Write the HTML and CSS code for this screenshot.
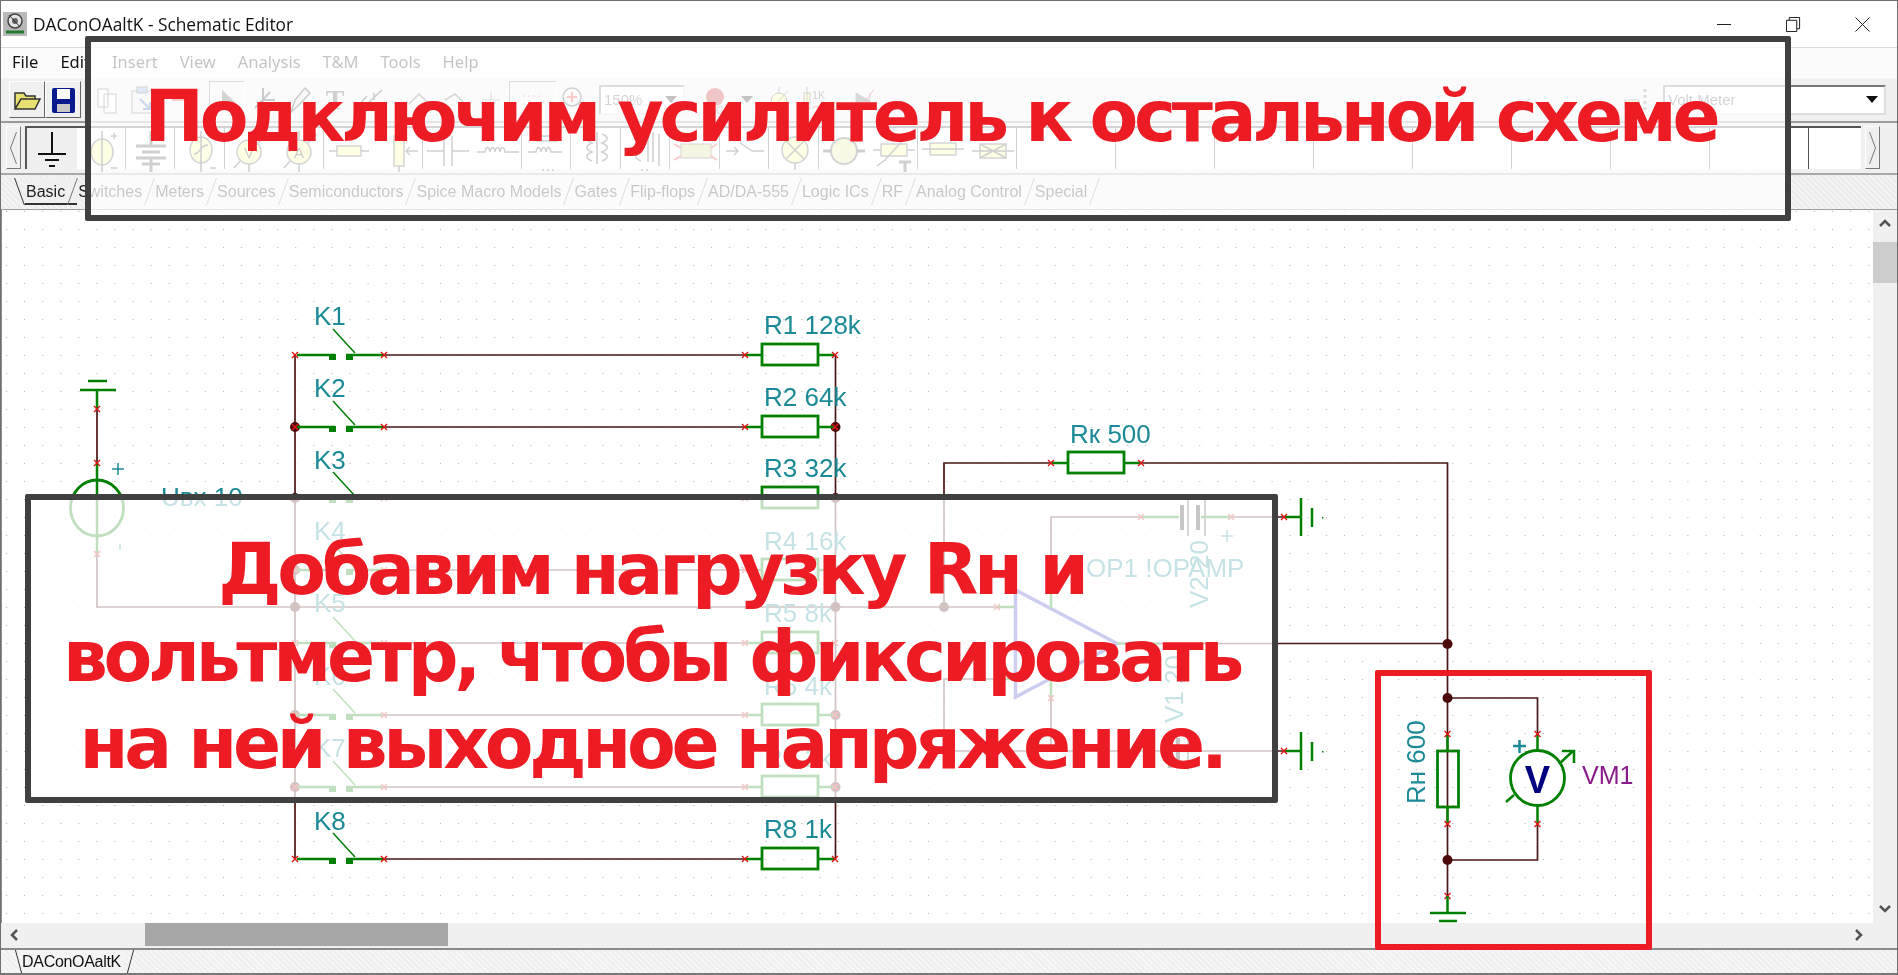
FILE: index.html
```html
<!DOCTYPE html>
<html lang="ru">

<head>
    <meta charset="UTF-8">
    <title>DAConOAaltK - Schematic Editor</title>
    <link rel="stylesheet" href="styles.css">
</head>

<body>
    <div class="window">
        <header class="titlebar">
            <svg class="app-icon" viewBox="0 0 24 24">
                <rect width="24" height="24" fill="#b8b8b8" />
                <circle cx="12" cy="9" r="7" fill="#e4e4e4" stroke="#444" stroke-width="1.5" />
                <circle cx="12" cy="9" r="3" fill="#666" />
                <path d="M3 20H21" stroke="#1f7a2e" stroke-width="3" />
                <path d="M6 3L17 15" stroke="#333" />
            </svg>
            <span class="app-title">DAConOAaltK - Schematic Editor</span>
            <div class="win-controls">
                <svg class="win-btn" viewBox="0 0 16 16"><path d="M0 8H15" /></svg>
                <svg class="win-btn" viewBox="0 0 16 16"><path d="M.5 3.5H11.5V15.5H.5ZM3.5 3.5V.5H14.5V12.5H11.5" /></svg>
                <svg class="win-btn" viewBox="0 0 16 16"><path d="M.5 .5L15.5 15.5M15.5 .5L.5 15.5" /></svg>
            </div>
        </header>

        <nav class="menubar">
            <span>File</span>
            <span>Edit</span>
            <span>Insert</span>
            <span>View</span>
            <span>Analysis</span>
            <span>T&amp;M</span>
            <span>Tools</span>
            <span>Help</span>
        </nav>

        <div class="toolbar">
            <div class="tb raised">
                <svg viewBox="0 0 30 30"><path d="M3 24V8H12L14 11H23V14H9L3 24H23L28 14H9" fill="#e8e070" stroke="#333" stroke-width="1.5" /></svg>
            </div>
            <div class="tb raised">
                <svg viewBox="0 0 30 30"><rect x="4" y="3" width="23" height="25" rx="2" fill="#0a1a8c" /><rect x="9" y="4" width="13" height="10" fill="#fff" /><rect x="9" y="19" width="13" height="8" fill="#c8c8c8" /></svg>
            </div>
            <div class="tb-gap w8"></div>
            <div class="tb">
                <svg viewBox="0 0 30 30"><path d="M6 4H16V22H6ZM12 9H24V28H12Z" fill="#fff" stroke="#555" /></svg>
            </div>
            <div class="tb">
                <svg viewBox="0 0 30 30"><rect x="4" y="6" width="20" height="22" fill="#e8e8e8" stroke="#555" /><rect x="9" y="2" width="10" height="6" fill="#88a8e8" stroke="#555" /><path d="M12 14L22 24M22 17V24H15" stroke="#2a5ab8" stroke-width="2" fill="none" /></svg>
            </div>
            <div class="tb">
                <svg viewBox="0 0 30 30"><path d="M8 15H22" stroke="#c33" stroke-width="2" /></svg>
            </div>
            <div class="tb-gap w12"></div>
            <div class="tb sunken">
                <svg viewBox="0 0 30 30"><path d="M10 5V24L15 19L19 27L22 25L18 18H24Z" fill="#555" /></svg>
            </div>
            <div class="tb">
                <svg viewBox="0 0 30 30"><path d="M15 3V27M15 15H27M7 23L22 7" stroke="#333" stroke-width="2" /></svg>
            </div>
            <div class="tb">
                <svg viewBox="0 0 30 30"><path d="M7 27L11 15L21 3L26 8L15 20Z" fill="#ddd" stroke="#333" stroke-width="1.5" /></svg>
            </div>
            <div class="tb"><span class="tb-letter">T</span></div>
            <div class="tb">
                <svg viewBox="0 0 30 30"><path d="M3 20L11 11M8 22L26 5M18 22H26M18 15V8" stroke="#333" stroke-width="1.5" /></svg>
            </div>
            <div class="tb-gap w12"></div>
            <div class="tb">
                <svg viewBox="0 0 30 30"><path d="M5 19L15 9L25 19" fill="none" stroke="#555" stroke-width="1.5" /></svg>
            </div>
            <div class="tb">
                <svg viewBox="0 0 30 30"><path d="M5 15L15 9L25 19" fill="none" stroke="#555" stroke-width="1.5" /></svg>
            </div>
            <div class="tb">
                <svg viewBox="0 0 30 30"><path d="M15 6V24M6 15H24" stroke="#777" /></svg>
            </div>
            <div class="tb sunken wide">
                <svg viewBox="0 0 30 30"><path d="M5 11H25M5 19H25" stroke="#777" stroke-dasharray="2 3" /></svg>
            </div>
            <div class="tb">
                <svg viewBox="0 0 30 30"><circle cx="12" cy="12" r="9" fill="#eee" stroke="#444" stroke-width="1.5" /><path d="M12 7V17M7 12H17" stroke="#d33" stroke-width="2" /><path d="M19 19L28 28" stroke="#555" stroke-width="3" /></svg>
            </div>
            <div class="tb-combo zoom-combo"><span>150%</span><i></i></div>
            <div class="tb">
                <svg viewBox="0 0 30 30"><circle cx="15" cy="12" r="9" fill="#c01818" /><text x="8" y="29" class="tb-mini">DC</text></svg>
            </div>
            <div class="tb narrow"><i class="tb-caret"></i></div>
            <div class="tb">
                <svg viewBox="0 0 30 30"><circle cx="15" cy="16" r="8" fill="#ff9" stroke="#555" /><path d="M15 2V8M15 24V29M9 22L24 6" stroke="#555" /></svg>
            </div>
            <div class="tb">
                <svg viewBox="0 0 30 30"><rect x="4" y="8" width="6" height="16" fill="#ff9" stroke="#555" /><path d="M7 2V28" stroke="#555" /><text x="12" y="14" class="tb-mini">1K</text><path d="M12 22H24" stroke="#d33" /></svg>
            </div>
            <div class="tb-gap w12"></div>
            <div class="tb">
                <svg viewBox="0 0 30 30"><path d="M8 8V24L22 16ZM22 8V24" fill="#666" stroke="#666" /><path d="M14 22L26 4" stroke="#d33" /></svg>
            </div>
            <div class="tb-fill"></div>
            <div class="tb">
                <svg viewBox="0 0 30 30"><path d="M4 15H18V22H4Z" fill="#e8d890" stroke="#777" /><path d="M24 4V28" stroke="#777" stroke-width="3" stroke-dasharray="3 3" /></svg>
            </div>
            <div class="tb-combo part-combo"><span>Volt Meter</span><i></i></div>
        </div>

        <div class="palette">
            <div class="pal-arrow"><svg viewBox="0 0 10 40"><path d="M8 4L2 20L8 36" /></svg></div>
            <div class="pal-cells">
                <div class="cell sel"><svg viewBox="0 0 49 46"><path d="M25 4V26M11 26H39M18 32H32M22 38H28" stroke="#111" stroke-width="2" /></svg></div>
                <div class="cell"><svg viewBox="0 0 49 46"><ellipse cx="25" cy="24" rx="11" ry="13" class="y" /><path d="M25 3V44M34 8H40M37 5V11M34 40H40" class="k" /></svg></div>
                <div class="cell"><svg viewBox="0 0 49 46"><path d="M25 3V18M10 18H40M16 24H34M10 30H40M25 30V44M16 36H34" class="k2" /></svg></div>
                <div class="cell"><svg viewBox="0 0 49 46"><ellipse cx="25" cy="22" rx="11" ry="13" class="y" /><path d="M25 3V44M18 26C24 26 24 17 32 17" class="k" /><path d="M34 40H40" class="k" /></svg></div>
                <div class="cell"><svg viewBox="0 0 49 46"><circle cx="24" cy="24" r="12" class="y" /><path d="M24 3V11M24 36V44M9 40L15 33M33 15L42 6" class="k" /><text x="24" y="30" class="pal-letter">V</text></svg></div>
                <div class="cell"><svg viewBox="0 0 49 46"><circle cx="24" cy="24" r="12" class="y" /><path d="M24 3V11M24 36V44M9 40L15 33M33 15L42 6" class="k" /><text x="24" y="30" class="pal-letter">A</text></svg></div>
                <div class="cell"><svg viewBox="0 0 49 46"><rect x="13" y="18" width="24" height="10" class="y" /><path d="M5 23H13M37 23H45" class="k" /></svg></div>
                <div class="cell"><svg viewBox="0 0 49 46"><rect x="20" y="8" width="10" height="30" class="y" /><path d="M25 2V8M25 38V44M44 23H32M36 19L32 23L36 27" class="k" /></svg></div>
                <div class="cell"><svg viewBox="0 0 49 46"><path d="M4 23H21M29 23H46M21 8V38M29 8V38" class="k" /></svg></div>
                <div class="cell"><svg viewBox="0 0 49 46"><path d="M4 24H12C13 18 16 18 17 24C18 18 21 18 22 24C23 18 26 18 27 24C28 18 31 18 32 24H46" class="k" /></svg></div>
                <div class="cell"><svg viewBox="0 0 49 46"><path d="M6 24H14C15 18 18 18 19 24C20 18 23 18 24 24C25 18 28 18 29 24H40M14 13H36M14 8H36" class="k" /><path d="M20 42H22M25 42H27M30 42H32" class="k" /></svg></div>
                <div class="cell"><svg viewBox="0 0 49 46"><path d="M20 6C13 9 13 12 20 15C13 18 13 21 20 24C13 27 13 30 20 33M30 6C37 9 37 12 30 15C37 18 37 21 30 24C37 27 37 30 30 33M25 4V36" class="k" /></svg></div>
                <div class="cell"><svg viewBox="0 0 49 46"><path d="M20 6C13 9 13 12 20 15C13 18 13 21 20 24C13 27 13 30 20 33M27 4V34M32 4V34M38 6V38" class="k" /><path d="M20 42H22M25 42H27" class="k" /></svg></div>
                <div class="cell"><svg viewBox="0 0 49 46"><rect x="10" y="16" width="30" height="14" fill="#d8d890" stroke="#555" /><path d="M3 16L10 20M3 32L10 28M46 16L40 20M46 32L40 28" stroke="#d33" stroke-width="2" /></svg></div>
                <div class="cell"><svg viewBox="0 0 49 46"><path d="M6 23H18M14 19L18 23L14 27M32 23H44M20 15L32 23" class="k" /></svg></div>
                <div class="cell"><svg viewBox="0 0 49 46"><circle cx="25" cy="22" r="13" class="y" /><path d="M16 13L34 31M34 13L16 31M25 35V42" class="k" /></svg></div>
                <div class="cell"><svg viewBox="0 0 49 46"><circle cx="25" cy="23" r="13" fill="#e8e8a0" stroke="#555" stroke-width="2" /><path d="M4 23H12M38 23H46" class="k2" /></svg></div>
                <div class="cell"><svg viewBox="0 0 49 46"><rect x="12" y="16" width="26" height="12" class="y" /><path d="M4 22H12M38 22H46M8 38L16 32L36 10" class="k" /><path d="M30 34H42M36 34V44" class="k2" /></svg></div>
                <div class="cell"><svg viewBox="0 0 49 46"><rect x="12" y="15" width="26" height="12" class="y" /><path d="M4 21H46M12 21H38" class="k" /></svg></div>
                <div class="cell"><svg viewBox="0 0 49 46"><rect x="12" y="16" width="26" height="14" class="y" /><path d="M4 23H46M12 16L38 30M12 30L38 16M18 8H32M20 12H30" class="k" /></svg></div>
            </div>
            <div class="pal-arrow right"><svg viewBox="0 0 10 40"><path d="M2 4L8 20L2 36" /></svg></div>
        </div>

        <div class="tabs">
            <span class="tab active">Basic</span>
            <span class="tab">Switches</span>
            <span class="tab">Meters</span>
            <span class="tab">Sources</span>
            <span class="tab">Semiconductors</span>
            <span class="tab">Spice Macro Models</span>
            <span class="tab">Gates</span>
            <span class="tab">Flip-flops</span>
            <span class="tab">AD/DA-555</span>
            <span class="tab">Logic ICs</span>
            <span class="tab">RF</span>
            <span class="tab">Analog Control</span>
            <span class="tab">Special</span>
        </div>

        <div class="workspace">
            <div class="sheet">
                <svg class="schematic" width="1871" height="713" viewBox="2 210 1871 713">
                    <defs>
                        <pattern id="grid" width="18.08" height="18" patternUnits="userSpaceOnUse" x="6" y="13">
                            <rect width="1" height="1" fill="#b0b0b0" />
                        </pattern>
                        <path id="xm" d="M-3-3L3 3M-3 3L3-3" class="xmark" />
                        <g id="switch">
                            <path d="M2 0H40M51 0H89" class="lead" />
                            <rect x="34" y="-1" width="7" height="6" fill="#008000" />
                            <rect x="51" y="-1" width="7" height="6" fill="#008000" />
                            <path d="M38-26L60-2" class="arm" />
                            <use href="#xm" />
                            <use href="#xm" x="89" />
                        </g>
                        <g id="res">
                            <path d="M0 0H17M73 0H90" class="lead" />
                            <rect x="17" y="-11" width="56" height="21" class="body" />
                            <use href="#xm" />
                            <use href="#xm" x="90" />
                        </g>
                        <g id="gnd-right">
                            <path d="M0 0H17" class="lead" />
                            <path d="M17-19V19" class="lead" />
                            <path d="M28-9V10" class="lead" />
                            <rect x="38" y="0" width="1.5" height="1.5" fill="#008000" />
                            <use href="#xm" />
                        </g>
                    </defs>
                    <rect x="2" y="210" width="1871" height="713" fill="url(#grid)" />

                    <!-- wires -->
                    <path class="wire" d="M97 409V463M97 554V607H997M295 355V859M835.5 355V859" />
                    <path class="wire" d="M384 355H745M384 427H745M384 498H745M384 570H745M384 643H745M384 715H745M384 787H745M384 859H745" />
                    <path class="wire" d="M997 679H944V751H1160M944 607V463H1051M1141 463H1447.5V896M1160 643.5H1447.5" />
                    <path class="wire" d="M1051 590V517H1141M1231 517H1284M1051 698V751M1195 751H1284" />
                    <path class="wire" d="M1447.5 698H1537.5V734M1537.5 824V860H1447.5" />

                    <!-- junctions -->
                    <g class="junctions">
                        <circle cx="295" cy="427" r="5" />
                        <circle cx="295" cy="498" r="5" />
                        <circle cx="295" cy="570" r="5" />
                        <circle cx="295" cy="607" r="5" />
                        <circle cx="295" cy="715" r="5" />
                        <circle cx="295" cy="787" r="5" />
                        <circle cx="835.5" cy="427" r="5" />
                        <circle cx="835.5" cy="498" r="5" />
                        <circle cx="835.5" cy="570" r="5" />
                        <circle cx="835.5" cy="607" r="5" />
                        <circle cx="835.5" cy="715" r="5" />
                        <circle cx="835.5" cy="787" r="5" />
                        <circle cx="944" cy="607" r="5" />
                        <circle cx="1447.5" cy="644" r="5" />
                        <circle cx="1447.5" cy="698" r="5" />
                        <circle cx="1447.5" cy="860" r="5" />
                    </g>

                    <!-- input source -->
                    <path class="lead" d="M80 390H116M88 381H107M97 390V409M97 463V555" />
                    <ellipse cx="97" cy="508" rx="26.500" ry="28" class="body" />
                    <use href="#xm" x="97" y="409" />
                    <use href="#xm" x="97" y="463" />
                    <use href="#xm" x="97" y="554" />
                    <path class="teal-mark" d="M112 469H124M118 463V475M120 544V550" />

                    <!-- switches and resistors -->
                    <use href="#switch" x="295" y="355" />
                    <use href="#switch" x="295" y="427" />
                    <use href="#switch" x="295" y="498" />
                    <use href="#switch" x="295" y="570" />
                    <use href="#switch" x="295" y="643" />
                    <use href="#switch" x="295" y="715" />
                    <use href="#switch" x="295" y="787" />
                    <use href="#switch" x="295" y="859" />
                    <use href="#res" x="745" y="355" />
                    <use href="#res" x="745" y="427" />
                    <use href="#res" x="745" y="498" />
                    <use href="#res" x="745" y="570" />
                    <use href="#res" x="745" y="643" />
                    <use href="#res" x="745" y="715" />
                    <use href="#res" x="745" y="787" />
                    <use href="#res" x="745" y="859" />
                    <use href="#res" x="1051" y="463" />

                    <!-- op amp -->
                    <path d="M1015.500 590V697L1117 643.500Z" class="opamp" />
                    <path class="lead" d="M997 607H1015M997 679H1015M1051 590V608M1051 680V698M1117 643.500H1160" />
                    <use href="#xm" x="997" y="607" />
                    <use href="#xm" x="997" y="679" />
                    <use href="#xm" x="1051" y="590" />
                    <use href="#xm" x="1051" y="698" />

                    <!-- supply batteries -->
                    <path class="lead" d="M1141 517H1179M1201 517H1231" />
                    <path class="plate" d="M1182 505V530M1198 505V530" />
                    <path class="plate-thin" d="M1188 498V536M1205 498V536" />
                    <use href="#xm" x="1141" y="517" />
                    <use href="#xm" x="1231" y="517" />
                    <path class="teal-mark" d="M1221 536H1233M1227 530V542" />
                    <use href="#gnd-right" x="1284" y="517" />
                    <path class="lead" d="M1160 751H1195" />
                    <path class="plate" d="M1170 738V768M1178 738V768" />
                    <path class="plate-thin" d="M1188 733V770" />
                    <use href="#gnd-right" x="1284" y="751" />

                    <!-- load and voltmeter -->
                    <g transform="translate(1447.500 734) rotate(90)"><use href="#res" /></g>
                    <use href="#xm" x="1447.500" y="896" />
                    <path class="lead" d="M1447.500 896V913M1430 913H1466M1439 921H1457" />
                    <path class="lead" d="M1537.500 734V751M1537.500 806V824" />
                    <ellipse cx="1537.500" cy="778" rx="27" ry="27.500" class="body" />
                    <path class="lead" d="M1559 764L1573 751M1562 751H1574V763M1506 802L1514 795" />
                    <use href="#xm" x="1537.500" y="734" />
                    <use href="#xm" x="1537.500" y="824" />
                    <path class="teal-mark thick" d="M1513 746H1526M1519.500 740V753" />

                    <!-- labels -->
                    <g class="label">
                        <text x="314" y="325">K1</text>
                        <text x="314" y="397">K2</text>
                        <text x="314" y="469">K3</text>
                        <text x="314" y="540">K4</text>
                        <text x="314" y="612">K5</text>
                        <text x="314" y="685">K6</text>
                        <text x="314" y="757">K7</text>
                        <text x="314" y="830">K8</text>
                        <text x="764" y="334">R1 128k</text>
                        <text x="764" y="406">R2 64k</text>
                        <text x="764" y="477">R3 32k</text>
                        <text x="764" y="550">R4 16k</text>
                        <text x="764" y="622">R5 8k</text>
                        <text x="764" y="695">R6 4k</text>
                        <text x="764" y="767">R7 2k</text>
                        <text x="764" y="838">R8 1k</text>
                        <text x="1070" y="443">Rк 500</text>
                        <text x="161" y="506">Uвх 10</text>
                        <text x="1086" y="577">OP1 !OPAMP</text>
                        <text transform="translate(1208 608) rotate(-90)">V2 20</text>
                        <text transform="translate(1183 723) rotate(-90)">V1 20</text>
                        <text transform="translate(1425 804) rotate(-90)">Rн 600</text>
                    </g>
                    <text x="1582" y="784" class="vm-label">VM1</text>
                    <text x="1537.500" y="793" class="vm-letter">V</text>
                </svg>
            </div>
            <div class="vscroll">
                <svg class="sb-arrow" viewBox="0 0 14 10"><path d="M2 8L7 3L12 8" /></svg>
                <div class="vthumb"></div>
                <svg class="sb-arrow bottom" viewBox="0 0 14 10"><path d="M2 2L7 7L12 2" /></svg>
            </div>
        </div>

        <div class="hscroll">
            <svg class="sb-arrow" viewBox="0 0 10 14"><path d="M8 2L3 7L8 12" /></svg>
            <div class="hthumb"></div>
            <svg class="sb-arrow end" viewBox="0 0 10 14"><path d="M2 2L7 7L2 12" /></svg>
        </div>

        <div class="doc-tabs">
            <span class="doc-tab">DAConOAaltK</span>
        </div>
    </div>

    <div class="note note-top">Подключим усилитель к остальной схеме</div>
    <div class="note note-main">Добавим нагрузку Rн и<br>вольтметр, чтобы фиксировать<br>на ней выходное напряжение.</div>
    <div class="frame"></div>
</body>

</html>
```

FILE: styles.css
```css
* {
    box-sizing: border-box;
}

html,
body {
    margin: 0;
    height: 100%;
    overflow: hidden;
    background: #fff;
}

.window {
    position: relative;
    display: flex;
    flex-direction: column;
    width: 1898px;
    height: 975px;
    border-top: 1px solid #6f6f6f;
    border-left: 1px solid #6f6f6f;
    border-right: 1px solid #6f6f6f;
    font-family: "Liberation Sans", Arial, sans-serif;
    filter: blur(0.35px);
}

/* title bar */
.titlebar {
    display: flex;
    align-items: center;
    height: 47px;
    padding-left: 2px;
    background: #fff;
    border-bottom: 1px solid #dcdcdc;
}

.app-icon {
    width: 24px;
    height: 24px;
}

.app-title {
    margin-left: 6px;
    font-family: "Open Sans", sans-serif;
    font-size: 17.3px;
    color: #111;
}

.win-controls {
    display: flex;
    margin-left: auto;
    padding-right: 27px;
    gap: 54px;
}

.win-btn {
    width: 15px;
    height: 15px;
    fill: none;
    stroke: #111;
    stroke-width: 1;
}

/* menu */
.menubar {
    display: flex;
    align-items: center;
    height: 29px;
    padding: 0 0 2px 11px;
    background: #fbfbfb;
    font-family: "Noto Sans", sans-serif;
    font-size: 16.5px;
    color: #111;
}

.menubar span {
    margin-right: 22px;
}

/* toolbar */
.toolbar {
    display: flex;
    align-items: center;
    height: 46px;
    padding-left: 8px;
    padding-right: 11px;
    background: #f0f0f0;
    border-top: 1px solid #fff;
    border-bottom: 2px solid #9a9a9a;
}

.tb {
    display: flex;
    align-items: center;
    justify-content: center;
    width: 36px;
    height: 37px;
}

.tb svg {
    width: 30px;
    height: 30px;
}

.tb.raised {
    border: 1px solid;
    border-color: #fff #666 #666 #fff;
}

.tb.sunken {
    border: 1px solid;
    border-color: #777 #fff #fff #777;
}

.tb.wide {
    width: 48px;
}

.tb.narrow {
    width: 28px;
}

.tb-gap.w8 {
    width: 8px;
}

.tb-gap.w12 {
    width: 12px;
}

.tb-fill {
    flex: 1;
}

.tb-letter {
    font-family: "Liberation Serif", serif;
    font-weight: bold;
    font-size: 28px;
    color: #444;
}

.tb-mini {
    font-size: 11px;
    fill: #555;
}

.tb-caret,
.tb-combo i {
    display: block;
    width: 0;
    height: 0;
    border-left: 6px solid transparent;
    border-right: 6px solid transparent;
    border-top: 7px solid #111;
}

.tb-combo {
    display: flex;
    align-items: center;
    height: 30px;
    background: #fff;
    border: 2px solid;
    border-color: #777 #ddd #ddd #777;
    font-size: 15px;
    color: #555;
}

.tb-combo span {
    flex: 1;
    padding-left: 3px;
}

.zoom-combo {
    width: 86px;
    margin: 0 12px 0 6px;
}

.part-combo {
    width: 223px;
    margin-left: 9px;
}

.tb-combo i {
    margin-right: 6px;
}

/* component palette */
.palette {
    display: flex;
    height: 52px;
    padding: 3px 0 4px 5px;
    background: #f0f0f0;
    border-bottom: 2px solid #a8a8a8;
}

.pal-arrow {
    display: flex;
    align-items: center;
    width: 15px;
    background: #f0f0f0;
    border: 1px solid;
    border-color: #fff #777 #777 #fff;
}

.pal-arrow svg {
    width: 13px;
    height: 40px;
    fill: none;
    stroke: #777;
}

.pal-arrow.right {
    margin-left: 4px;
    margin-right: 17px;
}

.pal-cells {
    display: flex;
    flex: 1;
    margin-left: 4px;
    padding-right: 0;
    background-color: #fff;
    background-image: repeating-linear-gradient(to right, transparent 0, transparent 48.5px, #555 48.5px, #555 49.5px);
    border-top: 2px solid #555;
    border-left: 2px solid #555;
}

.cell {
    flex: none;
    width: 49.5px;
    height: 100%;
}

.cell svg {
    display: block;
    width: 49px;
    height: 46px;
    fill: none;
}

.cell.sel {
    background: #f0f0f0;
}

.cell .y {
    fill: #ffff99;
    stroke: #555;
    stroke-width: 1.5;
}

.cell .k {
    stroke: #444;
    stroke-width: 1.5;
    fill: none;
}

.cell .k2 {
    stroke: #444;
    stroke-width: 3;
    fill: none;
}

.pal-letter {
    font-size: 15px;
    text-anchor: middle;
    fill: #333;
}

/* component tabs */
.tabs {
    display: flex;
    height: 35px;
    padding: 3px 0 0 24px;
    background: repeating-linear-gradient(45deg, #f4f4f4 0, #f4f4f4 2px, #ececec 2px, #ececec 4px);
    border-bottom: 1px solid #a0a0a0;
    font-size: 16px;
    color: #222;
}

.tab {
    position: relative;
    height: 27px;
    line-height: 28px;
    padding: 0 12px 0 1px;
}

.tab::after {
    content: "";
    position: absolute;
    top: 0;
    right: 4px;
    width: 1px;
    height: 27px;
    background: #777;
    transform: skewX(-20deg);
}

.tab.active {
    border-bottom: 2px solid #333;
    background: #f0f0f0;
}

.tab.active::before {
    content: "";
    position: absolute;
    top: 0;
    left: -6px;
    width: 1px;
    height: 27px;
    background: #333;
    transform: skewX(20deg);
}

/* drawing area */
.workspace {
    display: flex;
    flex: 1;
    min-height: 0;
    border-left: 1px solid #8a8a8a;
}

.sheet {
    flex: 1;
    background: #fff;
    overflow: hidden;
}

.schematic {
    display: block;
}

.wire {
    fill: none;
    stroke: #4b1616;
    stroke-width: 1.7;
}

.lead {
    fill: none;
    stroke: #008000;
    stroke-width: 2.500;
}

.arm {
    stroke: #008000;
    stroke-width: 1.500;
}

.body {
    fill: none;
    stroke: #008000;
    stroke-width: 2.800;
}

.xmark {
    fill: none;
    stroke: #e01414;
    stroke-width: 1.400;
}

.junctions circle {
    fill: #4b0a0a;
}

.teal-mark {
    fill: none;
    stroke: #1a8a96;
    stroke-width: 1.500;
}

.teal-mark.thick {
    stroke-width: 2.500;
}

.opamp {
    fill: none;
    stroke: #3838c8;
    stroke-width: 3.500;
}

.plate {
    fill: none;
    stroke: #222;
    stroke-width: 4;
}

.plate-thin {
    fill: none;
    stroke: #333;
    stroke-width: 1.500;
}

.label text {
    font-size: 26px;
    fill: #1a8a96;
}

.vm-label {
    font-size: 25px;
    fill: #8b1a8b;
}

.vm-letter {
    font-size: 38px;
    font-weight: bold;
    text-anchor: middle;
    fill: #000080;
}

/* scroll bars */
.vscroll {
    position: relative;
    flex: none;
    width: 24px;
    background: #f0f0f0;
}

.vthumb {
    height: 41px;
    margin-top: 32px;
    background: #cdcdcd;
}

.sb-arrow {
    position: absolute;
    fill: none;
    stroke: #555;
    stroke-width: 2.500;
}

.vscroll .sb-arrow {
    top: 8px;
    left: 5px;
    width: 14px;
    height: 10px;
}

.vscroll .sb-arrow.bottom {
    top: auto;
    bottom: 9px;
}

.hscroll {
    position: relative;
    flex: none;
    height: 25px;
    background: #f0f0f0;
}

.hthumb {
    width: 303px;
    height: 23px;
    margin-left: 144px;
    background: #a6a6a6;
}

.hscroll .sb-arrow {
    top: 5px;
    left: 8px;
    width: 10px;
    height: 14px;
}

.hscroll .sb-arrow.end {
    left: 1853px;
}

/* document tabs */
.doc-tabs {
    flex: none;
    height: 27px;
    padding-left: 21px;
    background: repeating-linear-gradient(45deg, #f6f6f6 0, #f6f6f6 2px, #efefef 2px, #efefef 4px);
    border-top: 2px solid #8a8a8a;
    border-bottom: 2px solid #777;
    font-size: 16px;
    color: #111;
}

.doc-tab {
    position: relative;
    display: inline-block;
    height: 23px;
    line-height: 24px;
    width: 103px;
    background: #f4f4f4;
    letter-spacing: -0.3px;
}

.doc-tab::before,
.doc-tab::after {
    content: "";
    position: absolute;
    top: 0;
    width: 1px;
    height: 23px;
    background: #333;
}

.doc-tab::before {
    left: -4px;
    transform: skewX(15deg);
}

.doc-tab::after {
    right: -6px;
    transform: skewX(-15deg);
}

/* overlays on top of the screenshot */
.note {
    position: absolute;
    display: flex;
    align-items: center;
    justify-content: center;
    text-align: center;
    background: rgba(255, 255, 255, 0.75);
    border: 6px solid #404040;
    border-radius: 2px;
    font-family: "DejaVu Sans", sans-serif;
    font-weight: bold;
    font-size: 71px;
    letter-spacing: -4.3px;
    color: #ed1c24;
}

.note-top {
    left: 85px;
    top: 36px;
    width: 1706px;
    height: 185px;
    padding: 0 15px 24px 0;
}

.note-main {
    left: 25px;
    top: 494px;
    width: 1253px;
    height: 309px;
    line-height: 87px;
    padding-top: 16px;
}

.frame {
    position: absolute;
    left: 1375px;
    top: 670px;
    width: 277px;
    height: 280px;
    border: 6px solid #ed1c24;
    border-radius: 2px;
}
```
